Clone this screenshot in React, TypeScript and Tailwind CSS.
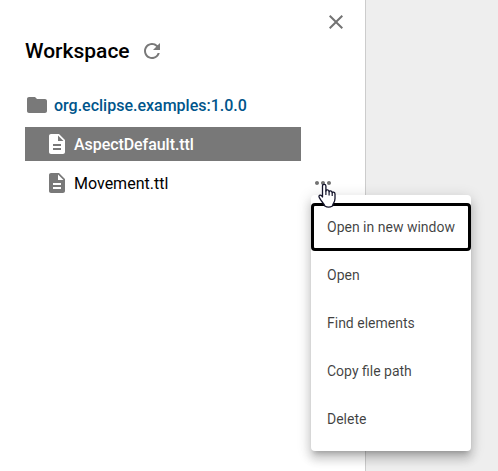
import { MdClose, MdDescription, MdFolder, MdMoreHoriz, MdRefresh } from "react-icons/md";

const menuItems = ["Open in new window", "Open", "Find elements", "Copy file path", "Delete"];

function ContextMenu() {
  return (
    <ul className="absolute left-[311px] top-[195px] w-40 rounded bg-white py-2 text-sm text-black/75 shadow-[0_5px_5px_-3px_rgba(0,0,0,0.2),0_8px_10px_1px_rgba(0,0,0,0.14),0_3px_14px_2px_rgba(0,0,0,0.12)]">
      {menuItems.map((item, i) => (
        <li
          key={item}
          className={
            i === 0
              ? "flex h-12 items-center whitespace-nowrap rounded border-3 border-black px-[13px]"
              : "flex h-12 items-center whitespace-nowrap px-4"
          }
        >
          {item}
        </li>
      ))}
    </ul>
  );
}

function HandCursor() {
  return (
    <svg className="absolute left-[317px] top-[183px]" width="20" height="26" viewBox="0 0 20 26">
      <path
        d="M5.5 14V3Q5.5 1.3 7.2 1.3T8.9 3V8Q9.2 6.8 10.5 6.9Q12 7 12.1 8.7Q12.5 7.7 13.7 7.9Q15.1 8.1 15.2 9.8Q15.6 9 16.6 9.2Q18 9.5 18 11V15.5Q18 18 16.5 20.3Q15.8 21.5 15.5 23Q11.5 25.2 7.8 23Q7.4 21.6 6 20Q4 17.5 2.3 14.6Q1.4 13 2.5 12.3Q3.7 11.7 4.8 13Z"
        fill="#fff"
        stroke="#14142b"
        strokeWidth="1.3"
        strokeLinejoin="round"
      />
      <path d="M8.9 7.5V12M12.1 8.5V12.5M15.2 9.5V13" fill="none" stroke="#14142b" strokeWidth="1.2" />
    </svg>
  );
}

export default function App() {
  return (
    <div className="relative flex h-[471px] w-[498px] overflow-hidden bg-[#eeeeee] font-[Roboto,sans-serif]">
      <aside className="w-[366px] shrink-0 border-r border-[#cccccc] bg-white pl-[25px] pt-2.5">
        <div className="flex h-6 justify-end pr-[17px] text-[#737373]">
          <MdClose size={24} />
        </div>
        <div className="mt-[5px] flex h-6 items-center">
          <h1 className="w-[115px] text-[21px] leading-6 font-medium text-black">Workspace</h1>
          <MdRefresh size={24} className="text-[#797979]" />
        </div>
        <div className="mt-[30px] flex h-6 items-center gap-[5px]">
          <MdFolder size={24} className="text-[#797979]" />
          <span className="pt-0.5 font-medium text-[#00558b]">org.eclipse.examples:1.0.0</span>
        </div>
        <div className="mt-2.5 flex h-[34px] w-[276px] items-center gap-[5px] bg-[#787878] pl-5 text-white">
          <MdDescription size={24} />
          <span className="pt-0.5 font-medium tracking-[-0.06px]">AspectDefault.ttl</span>
        </div>
        <div className="mt-[5px] flex h-[34px] items-center pl-5">
          <MdDescription size={24} className="text-[#797979]" />
          <span className="ml-[5px] w-[237px] pt-0.5 text-black">Movement.ttl</span>
          <MdMoreHoriz size={24} className="text-[#737373]" />
        </div>
      </aside>
      <ContextMenu />
      <HandCursor />
    </div>
  );
}
